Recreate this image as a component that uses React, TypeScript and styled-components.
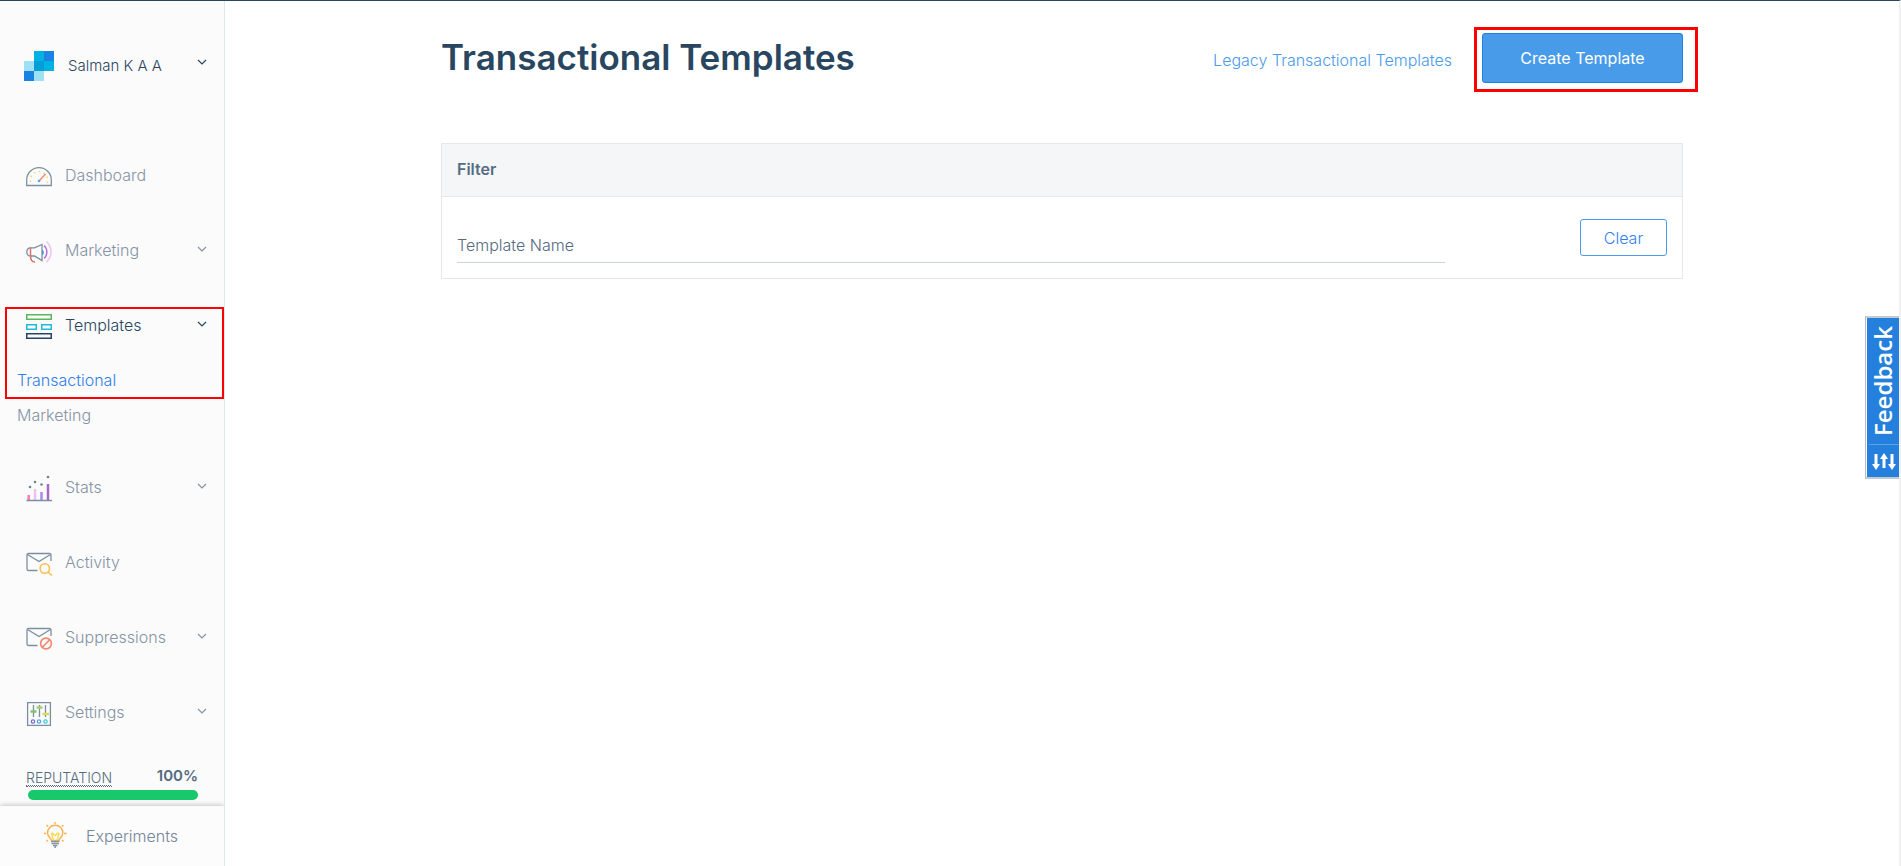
import React from "react";
import styled, { createGlobalStyle } from "styled-components";

const GlobalStyle = createGlobalStyle`
  * { box-sizing: border-box; }
  body {
    margin: 0;
    background: #ffffff;
    color: #546b81;
    font-family: Inter, "Liberation Sans", sans-serif;
    font-size: 16px;
    font-weight: 300;
    line-height: 24px;
  }
  button, input { font: inherit; }
  a { text-decoration: none; }
  ul { list-style: none; margin: 0; padding: 0; }
`;

const Shell = styled.div`
  display: flex;
  min-height: 100vh;
  border-top: 1px solid #294661;
  border-right: 2px solid #f0f0f0;
`;

const Sidebar = styled.aside`
  display: flex;
  flex-direction: column;
  flex: 0 0 225px;
  background: #fbfbfb;
  border-right: 1px solid #dfe6ee;
`;

const Chevron = styled.svg`
  flex: none;
  width: 10px;
  height: 10px;
  margin-bottom: 2px;
  fill: none;
  stroke: currentColor;
`;

const Account = styled.button`
  display: flex;
  align-items: center;
  gap: 14px;
  padding: 50px 17px 56px 24px;
  border: 0;
  background: none;
  color: #294661;
  font-size: 15px;
  text-align: left;

  ${Chevron} {
    margin-bottom: 8px;
  }
`;

const Grow = styled.span`
  flex: 1;
`;

const NavItem = styled.li`
  position: relative;
`;

const NavLink = styled.a<{ $active?: boolean }>`
  display: flex;
  align-items: center;
  gap: 12px;
  height: 75px;
  padding: 0 17px 0 25px;
  color: ${(p) => (p.$active ? "#294661" : "#8594a5")};
`;

const NavIcon = styled.svg`
  flex: none;
  width: 28px;
  height: 28px;
  margin-top: 4px;
  fill: none;
  stroke: #7c8fa2;
  stroke-width: 1.3;
`;

const SubList = styled.ul`
  padding: 1px 0 16px;
`;

const SubLink = styled.a<{ $active?: boolean }>`
  display: block;
  padding: 0 17px;
  line-height: 35px;
  color: ${(p) => (p.$active ? "#2f80ed" : "#8594a5")};
`;

const NavHighlight = styled.div`
  position: absolute;
  top: 20px;
  left: 5px;
  right: 0;
  height: 92px;
  border: 2px solid #ff0000;
  pointer-events: none;
`;

const Reputation = styled.section`
  padding: 16px 26px 6px 26px;
`;

const ReputationRow = styled.div`
  display: flex;
  justify-content: space-between;
  align-items: flex-end;
  height: 22px;
  margin-bottom: 3px;
  font-size: 14px;
  line-height: 16px;
`;

const Term = styled.abbr`
  border-bottom: 1px dotted #546b81;
  text-decoration: underline dotted;
  text-decoration-thickness: 1px;
  text-underline-offset: 2px;
`;

const Score = styled.strong`
  font-size: 15px;
  font-weight: 600;
  padding-bottom: 3px;
`;

const Meter = styled.div`
  height: 10px;
  margin-left: 2px;
  border-radius: 5px;
  background: #18c96b;
`;

const Experiments = styled.a`
  display: flex;
  align-items: center;
  gap: 18px;
  height: 60px;
  margin-top: auto;
  padding: 0 0 1px 42px;
  background: #fcfcfc;
  box-shadow: 0 -1px 5px rgba(0, 0, 0, 0.22);
  clip-path: inset(-8px 0 0 0);
  color: #74869a;
`;

const Main = styled.main`
  flex: 1;
  min-width: 0;
  padding: 32px;
`;

const Content = styled.div`
  max-width: 1242px;
  margin: 0 auto;
`;

const PageHeader = styled.header`
  display: flex;
  align-items: center;
  gap: 30px;
  margin-bottom: 60px;
`;

const Title = styled.h1`
  flex: 1;
  margin: 0;
  padding-bottom: 2px;
  color: #294661;
  font-size: 35px;
  font-weight: 600;
  line-height: 48px;
`;

const LegacyLink = styled.a`
  padding-top: 3px;
  color: #4a9bea;
`;

const CreateWrap = styled.div`
  position: relative;
`;

const CreateHighlight = styled.div`
  position: absolute;
  inset: -6px -15px -9px -8px;
  border: 3px solid #ff0000;
  pointer-events: none;
`;

const CreateButton = styled.button`
  display: block;
  width: 201px;
  height: 50px;
  border: 1px solid #1a82e2;
  border-radius: 3px;
  background: #489be8;
  color: #ffffff;
  font-weight: 400;
`;

const Panel = styled.section`
  border: 1px solid #e5e8eb;
`;

const PanelTitle = styled.h2`
  margin: 0;
  padding: 13px 15px 15px;
  border-bottom: 1px solid #e5e8eb;
  background: #f4f6f8;
  color: #546b81;
  font-size: 16px;
  font-weight: 600;
  line-height: 24px;
`;

const FilterForm = styled.form`
  display: grid;
  grid-template-columns: 49fr 11fr;
  align-items: start;
  padding: 22px 15px 15px;
`;

const FilterInput = styled.input`
  width: 100%;
  height: 44px;
  padding: 9px 0 0;
  border: 0;
  border-bottom: 1px solid #cdd2d7;
  outline: none;
  background: none;
  &::placeholder { color: #546b81; opacity: 1; }
`;

const ClearButton = styled.button`
  justify-self: end;
  width: 87px;
  height: 37px;
  border: 1px solid #4a9bea;
  border-radius: 3px;
  background: #ffffff;
  color: #2f80ed;
`;

const FeedbackTab = styled.button`
  position: fixed;
  top: 316px;
  right: 2px;
  display: flex;
  flex-direction: column;
  align-items: center;
  width: 34px;
  height: 163px;
  padding: 0 0 0 2px;
  border: 2px solid #c5c9d0;
  border-right: 0;
  border-left: 1px solid #b5bac2;
  background: #2480dc;
  box-shadow: inset 1px 0 #ffffff;
  color: #ffffff;
`;

const FeedbackLabel = styled.span`
  flex: 1;
  width: 30px;
  border-top: 1px solid #5ca3e8;
  font-family: "Open Sans", sans-serif;
  font-size: 24px;
  font-weight: 600;
  line-height: 28px;
  text-align: center;
  writing-mode: vertical-rl;
  transform: rotate(180deg);
`;

const FeedbackArrows = styled.svg`
  width: 26px;
  height: 32px;
  fill: none;
  stroke: #ffffff;
  stroke-width: 3;
`;

const Down = () => (
  <Chevron viewBox="0 0 10 10" aria-hidden="true">
    <path d="M1 3l4 4 4-4" strokeWidth="1.2" />
  </Chevron>
);

const Logo = () => (
  <svg width="30" height="30" viewBox="0 0 30 30" aria-hidden="true" shapeRendering="crispEdges">
    <path fill="#9de1f3" d="M0 10h10v10H0zM10 20h10v10H10z" />
    <path fill="#1a82e2" d="M0 20h10v10H0zM20 0h10v10H20z" />
    <path fill="#00b2e3" d="M10 0h10v10H10zM20 10h10v10H20z" />
    <path fill="#009dd9" d="M10 10h10v10H10z" />
  </svg>
);

const Envelope = () => (
  <>
    <path d="M12.500 20.500H3.500a1.500 1.500 0 0 1-1.500-1.500V5a1.500 1.500 0 0 1 1.500-1.500h21A1.500 1.500 0 0 1 26 5v6" />
    <path d="M2.500 4.500l11.500 7 11.500-7" />
  </>
);

const icons: Record<string, React.ReactNode> = {
  Dashboard: (
    <>
      <path d="M1.700 22.500V17a12.300 12.300 0 0 1 24.600 0v5.500z" />
      <path stroke="#fbd36b" strokeWidth="1.500" strokeDasharray="1.500 3.500" d="M5.500 19v-2a8.500 8.500 0 0 1 17 0v3" />
      <path stroke="#f98b74" strokeWidth="1.500" d="M14.500 17.500l6-6.500" />
      <circle cx="14" cy="18" r="1.300" fill="#5aa4f2" stroke="none" />
    </>
  ),
  Marketing: (
    <>
      <path stroke="#f0c4ee" strokeWidth="1.500" d="M21.500 3.500c6 5.500 6 15 0 20.500" />
      <path stroke="#b770cf" strokeWidth="1.500" d="M19 7.500c3.800 3.500 3.800 9.500 0 13" />
      <path stroke="#ee6b66" strokeWidth="1.500" d="M5.500 9.500v8.500c0 4 2 6 4.500 6" />
      <path d="M17 6.500v16l-7.500-4.500H5.500c-2.500 0-3.700-1.500-3.700-4s1.200-4.200 3.700-4.200h4z" />
      <path fill="#3b9be8" stroke="none" d="M17 12c2.500 0 2.500 5 0 5z" />
    </>
  ),
  Templates: (
    <g strokeWidth="1.500">
      <path stroke="#5bb75e" d="M1.750 1.750h24.500v4.500H1.750z" />
      <path stroke="#20bcd8" d="M1.750 11.750h9.500v4.500h-9.500zM16.750 11.750h9.500v4.500h-9.500z" />
      <path stroke="#294661" d="M1.750 20.750h24.500v4.500H1.750z" />
    </g>
  ),
  Stats: (
    <>
      <path stroke="#fb7ba5" strokeWidth="2.500" d="M3.700 20v5" />
      <path stroke="#e9c3ec" strokeWidth="2.500" d="M10 14v11" />
      <path stroke="#a68af5" strokeWidth="2.500" d="M16.500 17v8" />
      <path stroke="#a968c4" strokeWidth="2.500" d="M23 9v16" />
      <path strokeWidth="1.500" d="M1.500 25.500h25.500" />
      <g fill="#6f8496" stroke="none">
        <circle cx="5" cy="12" r="1.300" />
        <circle cx="10" cy="7" r="1.300" />
        <circle cx="16.500" cy="9.500" r="1.300" />
        <circle cx="23" cy="2" r="1.300" />
      </g>
    </>
  ),
  Activity: (
    <>
      <Envelope />
      <g stroke="#fcbd55" strokeWidth="1.600">
        <circle cx="19.800" cy="18.500" r="4.700" />
        <path d="M23 22l4 3.500" />
      </g>
    </>
  ),
  Suppressions: (
    <>
      <Envelope />
      <g stroke="#f4866c" strokeWidth="1.600">
        <circle cx="21" cy="18.500" r="5.400" />
        <path d="M17.300 22.200l7.400-7.400" />
      </g>
    </>
  ),
  Settings: (
    <>
      <path d="M2.600 2.600h22.800v22.800H2.600z" />
      <path d="M8.500 5v12M14.500 5v12M20.500 5v12" />
      <path stroke="#7cc66c" strokeWidth="2.500" d="M5.500 11.500h6" />
      <path stroke="#a4d16a" strokeWidth="2.500" d="M11.500 7.500h6" />
      <path stroke="#d8dc4e" strokeWidth="2.500" d="M17.500 14h6.500" />
      <circle cx="8" cy="21.500" r="1.700" stroke="#7a72cf" />
      <circle cx="14" cy="21.500" r="1.700" stroke="#56a6ee" />
      <circle cx="20.500" cy="21.500" r="1.700" stroke="#42cbe0" />
    </>
  ),
};

const Bulb = () => (
  <svg width="26" height="28" viewBox="0 0 26 28" fill="none" aria-hidden="true">
    <g stroke="#fbb04c" strokeWidth="1.400">
      <path d="M9.500 18.500c0-2-4-3.500-4-7.500a7.700 7.700 0 0 1 15.400 0c0 4-4 5.500-4 7.500z" />
      <path d="M13 0v2M4.500 3l1.500 1.500M21.500 3L20 4.500M2 11.500h2M22 11.500h2.500M4.500 19.500L6 18M21.500 19.500L20 18" />
    </g>
    <path stroke="#f7dc55" strokeWidth="1.500" d="M11.500 18.500l-2-7c2-1 2 2 3.500 2s1.500-3 4-2l-2 7" />
    <path stroke="#8796a6" strokeWidth="1.500" d="M9 19.500h8.500M9.500 21.500h7.500M11 23.500h4.500M13.200 23v3" />
  </svg>
);

interface Entry {
  name: string;
  expandable?: boolean;
  children?: string[];
}

const entries: Entry[] = [
  { name: "Dashboard" },
  { name: "Marketing", expandable: true },
  { name: "Templates", expandable: true, children: ["Transactional", "Marketing"] },
  { name: "Stats", expandable: true },
  { name: "Activity" },
  { name: "Suppressions", expandable: true },
  { name: "Settings", expandable: true },
];

export default function App() {
  return (
    <>
      <GlobalStyle />
      <Shell>
        <Sidebar>
          <Account type="button">
            <Logo />
            <Grow>Salman K A A</Grow>
            <Down />
          </Account>
          <nav aria-label="Main">
            <ul>
              {entries.map((entry) => (
                <NavItem key={entry.name}>
                  <NavLink href="#" $active={!!entry.children}>
                    <NavIcon viewBox="0 0 28 28" aria-hidden="true">{icons[entry.name]}</NavIcon>
                    <Grow>{entry.name}</Grow>
                    {entry.expandable && <Down />}
                  </NavLink>
                  {entry.children && (
                    <>
                      <SubList>
                        {entry.children.map((child, i) => (
                          <li key={child}>
                            <SubLink href="#" $active={i === 0}>{child}</SubLink>
                          </li>
                        ))}
                      </SubList>
                      <NavHighlight />
                    </>
                  )}
                </NavItem>
              ))}
            </ul>
          </nav>
          <Reputation>
            <ReputationRow>
              <Term title="Sender reputation">REPUTATION</Term>
              <Score>100%</Score>
            </ReputationRow>
            <Meter />
          </Reputation>
          <Experiments href="#">
            <Bulb />
            Experiments
          </Experiments>
        </Sidebar>
        <Main>
          <Content>
            <PageHeader>
              <Title>Transactional Templates</Title>
              <LegacyLink href="#">Legacy Transactional Templates</LegacyLink>
              <CreateWrap>
                <CreateButton type="button">Create Template</CreateButton>
                <CreateHighlight />
              </CreateWrap>
            </PageHeader>
            <Panel>
              <PanelTitle>Filter</PanelTitle>
              <FilterForm>
                <FilterInput type="text" aria-label="Template Name" placeholder="Template Name" />
                <ClearButton type="button">Clear</ClearButton>
              </FilterForm>
            </Panel>
          </Content>
        </Main>
      </Shell>
      <FeedbackTab type="button">
        <FeedbackLabel>Feedback</FeedbackLabel>
        <FeedbackArrows viewBox="0 0 26 32" aria-hidden="true">
          <path d="M5 9v13M13 23V12M21 9v13" />
          <path fill="#ffffff" stroke="none" d="M1 19h8l-4 6zM9 14h8l-4-6zM17 19h8l-4 6z" />
        </FeedbackArrows>
      </FeedbackTab>
    </>
  );
}
